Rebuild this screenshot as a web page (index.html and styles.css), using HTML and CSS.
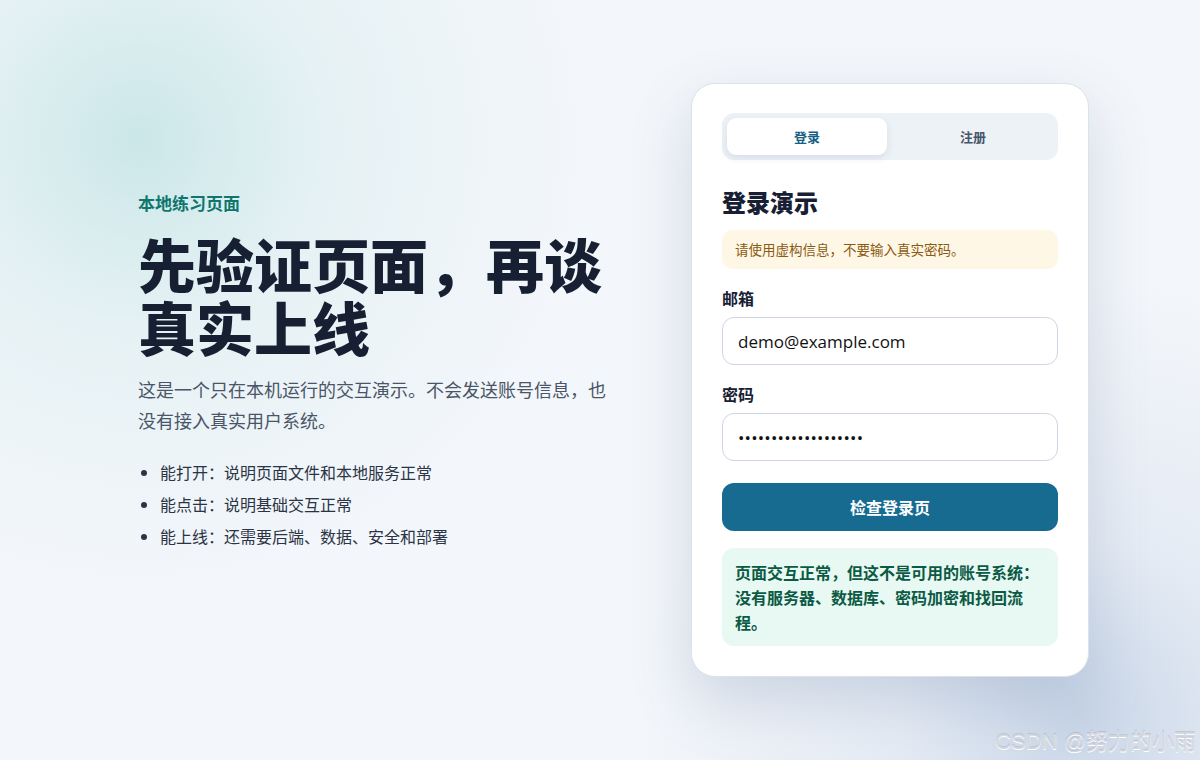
FILE: index.html
```html
<!DOCTYPE html>
<html lang="zh-CN">
<head>
    <meta charset="UTF-8">
    <meta name="viewport" content="width=device-width, initial-scale=1.0">
    <title>登录演示</title>
    <link rel="stylesheet" href="styles.css">
</head>
<body>
    <div class="page">
        <div class="intro">
            <div class="eyebrow">本地练习页面</div>
            <h1>先验证页面，再谈真实上线</h1>
            <p class="lead">这是一个只在本机运行的交互演示。不会发送账号信息，也没有接入真实用户系统。</p>
            <ul class="checks">
                <li>能打开：说明页面文件和本地服务正常</li>
                <li>能点击：说明基础交互正常</li>
                <li>能上线：还需要后端、数据、安全和部署</li>
            </ul>
        </div>

        <div class="card">
            <div class="tabs">
                <button class="tab active">登录</button>
                <button class="tab">注册</button>
            </div>
            <h2>登录演示</h2>
            <div class="notice">请使用虚构信息，不要输入真实密码。</div>
            <label class="field-label" for="email">邮箱</label>
            <input class="field" id="email" type="text" value="demo@example.com">
            <label class="field-label" for="pwd">密码</label>
            <input class="field pwd" id="pwd" type="password" value="demopassword1234567">
            <button class="submit-btn">检查登录页</button>
            <div class="result">页面交互正常，但这不是可用的账号系统：没有服务器、数据库、密码加密和找回流程。</div>
        </div>
    </div>
    <div class="watermark">CSDN @努力的小雨</div>
</body>
</html>
```

FILE: styles.css
```css
* {
    box-sizing: border-box;
}
html, body {
    height: 100%;
}
body {
    margin: 0;
    font-family: "Noto Sans CJK SC", "Noto Sans", sans-serif;
    color: #172033;
    background:
        radial-gradient(circle at 140px 140px, rgba(190, 226, 226, 0.75) 0, rgba(214, 236, 238, 0.45) 190px, rgba(243, 246, 250, 0) 440px),
        radial-gradient(circle at 1080px 720px, rgba(196, 210, 230, 0.9) 0, rgba(214, 224, 238, 0.5) 180px, rgba(243, 246, 250, 0) 440px),
        #f3f6fa;
    overflow: hidden;
}
.page {
    height: 100%;
    display: flex;
    align-items: center;
    justify-content: space-between;
    padding: 0 111px 0 138px;
}
.intro {
    width: 480px;
    margin-top: -19px;
}
.eyebrow {
    color: #0f766e;
    font-size: 17px;
    font-weight: 700;
    margin-bottom: 17px;
}
h1 {
    margin: 0 0 16px;
    font-size: 58px;
    line-height: 63px;
    font-weight: 900;
    color: #172033;
    letter-spacing: 0;
}
.lead {
    margin: 0 0 20px;
    font-size: 18px;
    line-height: 31px;
    color: #4a5567;
    width: 472px;
}
.checks {
    margin: 0;
    padding-left: 22px;
    font-size: 16px;
    line-height: 32px;
    color: #2b3445;
}
.card {
    width: 398px;
    background: #fff;
    border: 1px solid #dbe2ea;
    border-radius: 24px;
    padding: 29px 30px 30px;
    box-shadow: 0 24px 60px rgba(90, 115, 155, 0.22);
}
.tabs {
    display: flex;
    gap: 6px;
    background: #edf2f7;
    border-radius: 12px;
    padding: 5px;
}
.tab {
    flex: 1;
    height: 37px;
    border: none;
    background: transparent;
    border-radius: 9px;
    font-family: inherit;
    font-size: 13px;
    font-weight: 700;
    color: #475569;
}
.tab.active {
    background: #fff;
    color: #175f85;
    box-shadow: 0 3px 8px rgba(30, 50, 80, 0.1);
}
h2 {
    margin: 26px 0 12px;
    font-size: 24px;
    line-height: 32px;
    font-weight: 800;
    color: #172033;
}
.notice {
    background: #fff7e6;
    color: #8a5a12;
    border-radius: 10px;
    font-size: 13.5px;
    line-height: 19px;
    padding: 10px 13px;
    margin-bottom: 18px;
}
.field-label {
    display: block;
    font-size: 16px;
    font-weight: 700;
    line-height: 22px;
    margin-bottom: 8px;
    color: #172033;
}
.field {
    display: block;
    width: 100%;
    height: 48px;
    border: 1px solid #cdd6e2;
    border-radius: 12px;
    padding: 0 15px;
    font-family: "Open Sans", "Noto Sans", sans-serif;
    font-size: 17px;
    color: #111;
    background: #fff;
    margin-bottom: 18px;
    outline: none;
}
.field.pwd {
    letter-spacing: 0.2px;
}
.submit-btn {
    display: block;
    width: 100%;
    height: 48px;
    margin-top: 22px;
    border: none;
    border-radius: 12px;
    background: #176b91;
    color: #fff;
    font-family: inherit;
    font-size: 16px;
    font-weight: 700;
}
.result {
    margin-top: 17px;
    background: #e8f8f2;
    color: #0b5a45;
    border-radius: 12px;
    padding: 12px 13px 11px;
    font-size: 16px;
    line-height: 25px;
    font-weight: 700;
}
.watermark {
    position: absolute;
    right: 4px;
    bottom: 5px;
    font-family: "Liberation Sans", "Noto Sans CJK SC", sans-serif;
    font-size: 22px;
    font-weight: 400;
    color: #d3d7dd;
    text-shadow: 0 1px 0 #fff, 0 -1px 0 rgba(120, 130, 145, 0.25);
}
```
